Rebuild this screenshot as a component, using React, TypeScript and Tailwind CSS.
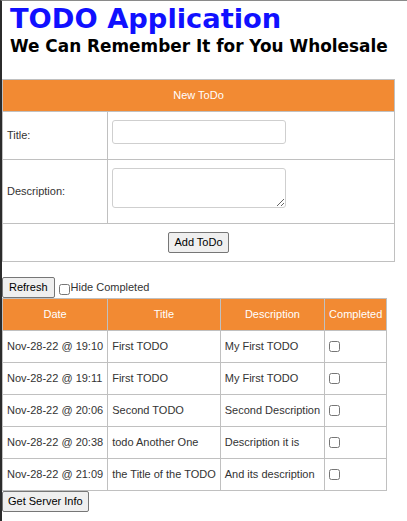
const todos = [
  { date: "Nov-28-22 @ 19:10", title: "First TODO", description: "My First TODO" },
  { date: "Nov-28-22 @ 19:11", title: "First TODO", description: "My First TODO" },
  { date: "Nov-28-22 @ 20:06", title: "Second TODO", description: "Second Description" },
  { date: "Nov-28-22 @ 20:38", title: "todo Another One", description: "Description it is" },
  { date: "Nov-28-22 @ 21:09", title: "the Title of the TODO", description: "And its description" },
];

const btn =
  "h-[21px] border border-[#767676] rounded-[2px] bg-[#efefef] px-[5px] text-[11px] text-black leading-[13px] whitespace-nowrap";

const cell = "border border-[#c0c0c0] px-[4px] whitespace-nowrap";

const App = () => {
  return (
    <div className="min-h-[521px] border-l-2 border-t border-l-[#2b2b2b] border-t-[#8a8a8a] bg-white font-['Liberation_Sans',Arial,sans-serif] text-[11px] text-[#333]">
      <div className="px-2 pt-[2px]">
        <h1 className="font-['DejaVu_Sans',Verdana,sans-serif] font-bold text-[27.3px] leading-[32px] text-[#1010ff]">
          TODO Application
        </h1>
        <h2 className="font-['DejaVu_Sans',Verdana,sans-serif] font-bold text-[16.9px] leading-[22px] text-black">
          We Can Remember It for You Wholesale
        </h2>
      </div>

      <table className="mt-[22px] w-[393px] border-collapse">
        <thead>
          <tr>
            <th colSpan={2} className="h-[32px] border border-[#c0c0c0] bg-[#f28a33] font-normal text-white">
              New ToDo
            </th>
          </tr>
        </thead>
        <tbody>
          <tr>
            <td className="h-[48px] w-[105px] border border-[#c0c0c0] px-[4px] text-left">Title:</td>
            <td className="border border-[#c0c0c0] px-[4px] pt-[8px] align-top">
              <input type="text" className="block h-[24px] w-[174px] rounded-[3px] border border-[#cfcfcf] px-1 outline-none" />
            </td>
          </tr>
          <tr>
            <td className="h-[64px] border border-[#c0c0c0] px-[4px] text-left">Description:</td>
            <td className="border border-[#c0c0c0] px-[4px] pt-[8px] align-top">
              <textarea className="block h-[40px] w-[174px] rounded-[3px] border border-[#cfcfcf] px-1 outline-none" />
            </td>
          </tr>
          <tr>
            <td colSpan={2} className="h-[38px] border border-[#c0c0c0] text-center">
              <button className={btn}>Add ToDo</button>
            </td>
          </tr>
        </tbody>
      </table>

      <div className="mt-[15px] flex items-start">
        <button className={`${btn} px-[6px]`}>Refresh</button>
        <input type="checkbox" className="ml-[4px] mr-[1px] mt-[7px] h-[11px] w-[11px]" />
        <span className="leading-[14px] pt-[3px]">Hide Completed</span>
      </div>

      <table className="border-collapse">
        <thead>
          <tr>
            {["Date", "Title", "Description", "Completed"].map((h) => (
              <th key={h} className={`h-[32px] ${cell} bg-[#f28a33] font-normal text-white`}>
                {h}
              </th>
            ))}
          </tr>
        </thead>
        <tbody>
          {todos.map((t) => (
            <tr key={t.date}>
              <td className={`h-[32px] ${cell}`}>{t.date}</td>
              <td className={cell}>{t.title}</td>
              <td className={cell}>{t.description}</td>
              <td className={cell}>
                <input type="checkbox" className="mt-[5px] h-[11px] w-[11px]" />
              </td>
            </tr>
          ))}
        </tbody>
      </table>

      <button className={btn}>Get Server Info</button>
    </div>
  );
};

export default App;
